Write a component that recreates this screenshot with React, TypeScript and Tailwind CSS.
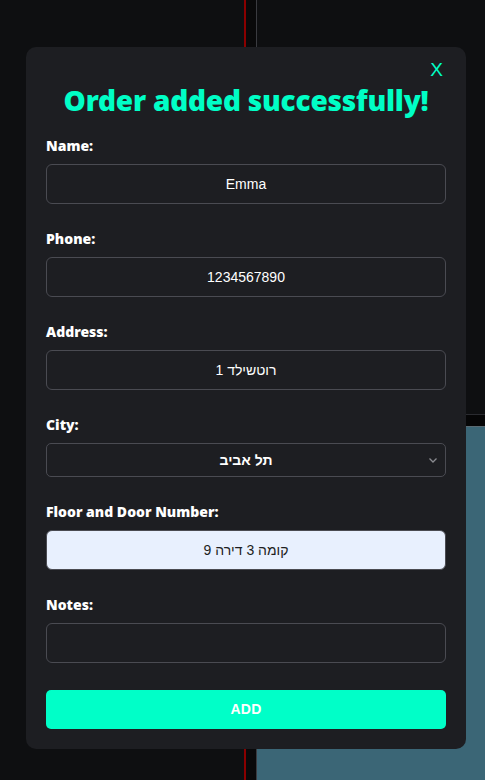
import React from 'react';

const fields = [
  { label: 'Name:', value: 'Emma' },
  { label: 'Phone:', value: '1234567890' },
  { label: 'Address:', value: 'רוטשילד 1' },
];

const labelCls =
  "block text-[14px] leading-[20px] font-black text-white font-['Noto_Sans',sans-serif] mb-[8px]";
const inputCls =
  'w-full h-[40px] rounded-[6px] border border-[#4a4b52] bg-[#1d1e22] text-center text-[14px] text-white outline-none';

export default function App() {
  return (
    <div className="relative w-[485px] h-[780px] overflow-hidden bg-[#0e0f11] font-['Liberation_Sans',sans-serif]">
      {/* page behind the modal */}
      <div className="flex h-full">
        <div className="w-[244px] shrink-0" />
        <div className="w-[2px] shrink-0 bg-[#8a0000]" />
        <div className="w-[10px] shrink-0 bg-[#09090a]" />
        <div className="w-px shrink-0 bg-[#3a3b40]" />
        <div className="flex-1 flex flex-col">
          <div className="h-[414px]" />
          <div className="h-px bg-[#2a2b30]" />
          <div className="h-[11px] bg-[#060607]" />
          <div className="h-px bg-[#5a6a72]" />
          <div className="flex-1 bg-[#3b6676]" />
        </div>
      </div>

      {/* modal */}
      <div className="absolute left-[26px] top-[47px] w-[440px] rounded-[10px] bg-[#1d1e22] px-5 pt-[10px] pb-5">
        <div className="flex justify-end">
          <button className="text-[#00ffc6] text-[19px] leading-none mr-[3px] mt-[3px]">X</button>
        </div>
        <h2 className="mt-[4px] text-center text-[28px] leading-[34px] font-black tracking-[-0.2px] text-[#00ffc6] font-['Noto_Sans',sans-serif]">
          Order added successfully!
        </h2>

        <form className="mt-[19px] flex flex-col" onSubmit={(e) => e.preventDefault()}>
          {fields.map((f) => (
            <div key={f.label} className="mb-[25px]">
              <label className={labelCls}>{f.label}</label>
              <input readOnly value={f.value} className={inputCls} />
            </div>
          ))}

          <div className="mb-[25px]">
            <label className={labelCls}>City:</label>
            <div className="relative h-[34px] rounded-[5px] border border-[#4a4b52] flex items-center justify-center">
              <span className="text-[14px] text-white font-bold">תל אביב</span>
              <svg className="absolute right-[7px] top-1/2 -translate-y-1/2" width="10" height="10" viewBox="0 0 10 10" fill="none" stroke="#8a8b90" strokeWidth="1.3">
                <path d="M1.5 3.5 L5 7 L8.5 3.5" />
              </svg>
            </div>
          </div>

          <div className="mb-[25px]">
            <label className={labelCls}>Floor and Door Number:</label>
            <input
              readOnly
              value="קומה 3 דירה 9"
              className="w-full h-[40px] rounded-[6px] border border-[#4a4b52] bg-[#e8f0fe] text-center text-[14px] text-[#1d1e22] outline-none"
            />
          </div>

          <div className="mb-[27px]">
            <label className={labelCls}>Notes:</label>
            <input readOnly value="" className={inputCls} />
          </div>

          <button className="w-full h-[39px] rounded-[5px] bg-[#00ffc8] text-white text-[14px] font-bold tracking-[0.3px]">
            ADD
          </button>
        </form>
      </div>
    </div>
  );
}
